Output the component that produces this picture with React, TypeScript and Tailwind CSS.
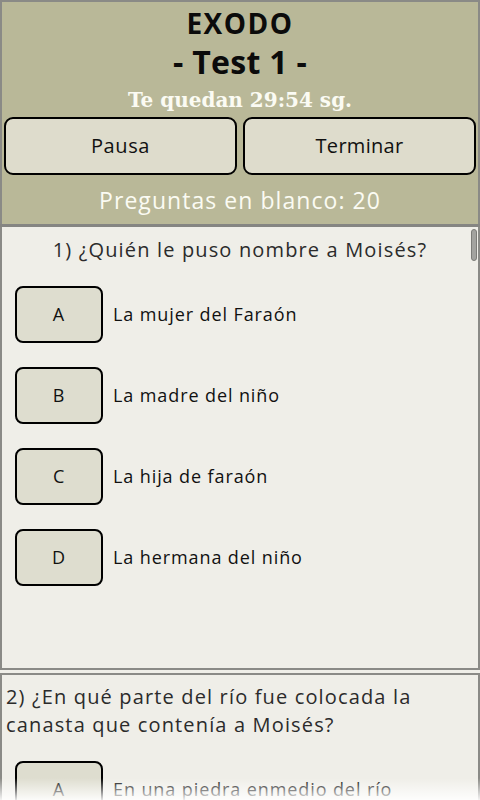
import React from "react";

const sans = { fontFamily: '"Open Sans", "Noto Sans", sans-serif' };

function Option({ letter, text }: { letter: string; text: string }) {
  return (
    <div className="flex items-center h-[57px]">
      <div className="ml-[15px] w-[88px] h-[57px] rounded-[8px] border-2 border-black bg-[#deddcf] flex items-center justify-center text-[18px] text-[#111] tracking-[0.9px]">
        {letter}
      </div>
      <div className="ml-[10px] text-[18px] text-[#111] tracking-[0.9px]">{text}</div>
    </div>
  );
}

export default function App() {
  return (
    <div className="w-[480px] h-[800px] overflow-hidden relative bg-[#efeee8]" style={sans}>
      {/* Header */}
      <div className="h-[224px] bg-[#b9b898] border-t-2 border-x-2 border-[#8a8a86] flex flex-col items-center">
        <div className="h-[40px] flex items-center text-[28px] font-bold text-[#0b0b0b] leading-none pt-[2px] tracking-[1.5px]">EXODO</div>
        <div className="h-[40px] flex items-center text-[32px] font-bold text-[#0b0b0b] leading-none tracking-[0.3px]">- Test 1 -</div>
        <div
          className="h-[35px] flex items-center text-[20px] font-bold text-[#fbfbf3] leading-none"
          style={{ fontFamily: '"DejaVu Serif", "Liberation Serif", serif' }}
        >
          Te quedan 29:54 sg.
        </div>
        <div className="w-full flex gap-[6px] px-[2px] h-[58px]">
          <div className="flex-1 rounded-[9px] border-2 border-black bg-[#dedccc] flex items-center justify-center text-[20px] text-[#111] tracking-[0.6px]">
            Pausa
          </div>
          <div className="flex-1 rounded-[9px] border-2 border-black bg-[#dedccc] flex items-center justify-center text-[20px] text-[#111] tracking-[0.3px]">
            Terminar
          </div>
        </div>
        <div className="flex-1 flex items-center text-[23px] text-[#fbfbf3] leading-none pt-[2px] tracking-[1.05px]">
          Preguntas en blanco: 20
        </div>
      </div>
      <div className="h-[3px] bg-[#858582]" />

      {/* Question 1 */}
      <div className="relative h-[443px] border-x-2 border-b-2 border-[#8a8a86] bg-[#efeee8]">
        <div className="h-[44px] flex items-center justify-center text-[20px] text-[#2b2b2b] pt-[1px] tracking-[1.15px]">
          1) ¿Quién le puso nombre a Moisés?
        </div>
        <div className="mt-[15px] flex flex-col gap-[24px] -ml-[2px]">
          <Option letter="A" text="La mujer del Faraón" />
          <Option letter="B" text="La madre del niño" />
          <Option letter="C" text="La hija de faraón" />
          <Option letter="D" text="La hermana del niño" />
        </div>
        <div className="absolute right-[1px] top-[2px] w-[6px] h-[32px] rounded-[3px] bg-[#a3a39f] border border-[#7c7c78]" />
      </div>
      <div className="h-[3px] bg-[#efeee8]" />

      {/* Question 2 */}
      <div className="h-[200px] border-x-2 border-t-2 border-[#8a8a86] bg-[#efeee8]">
        <div className="px-[4px] pt-[8px] text-[20px] leading-[28px] text-[#2b2b2b] tracking-[1.15px]">
          2) ¿En qué parte del río fue colocada la canasta que contenía a Moisés?
        </div>
        <div className="mt-[22px] -ml-[2px]">
          <Option letter="A" text="En una piedra enmedio del río" />
        </div>
      </div>

      <div className="absolute left-0 right-0 bottom-0 h-[22px] bg-gradient-to-b from-transparent to-white/90" />
    </div>
  );
}
